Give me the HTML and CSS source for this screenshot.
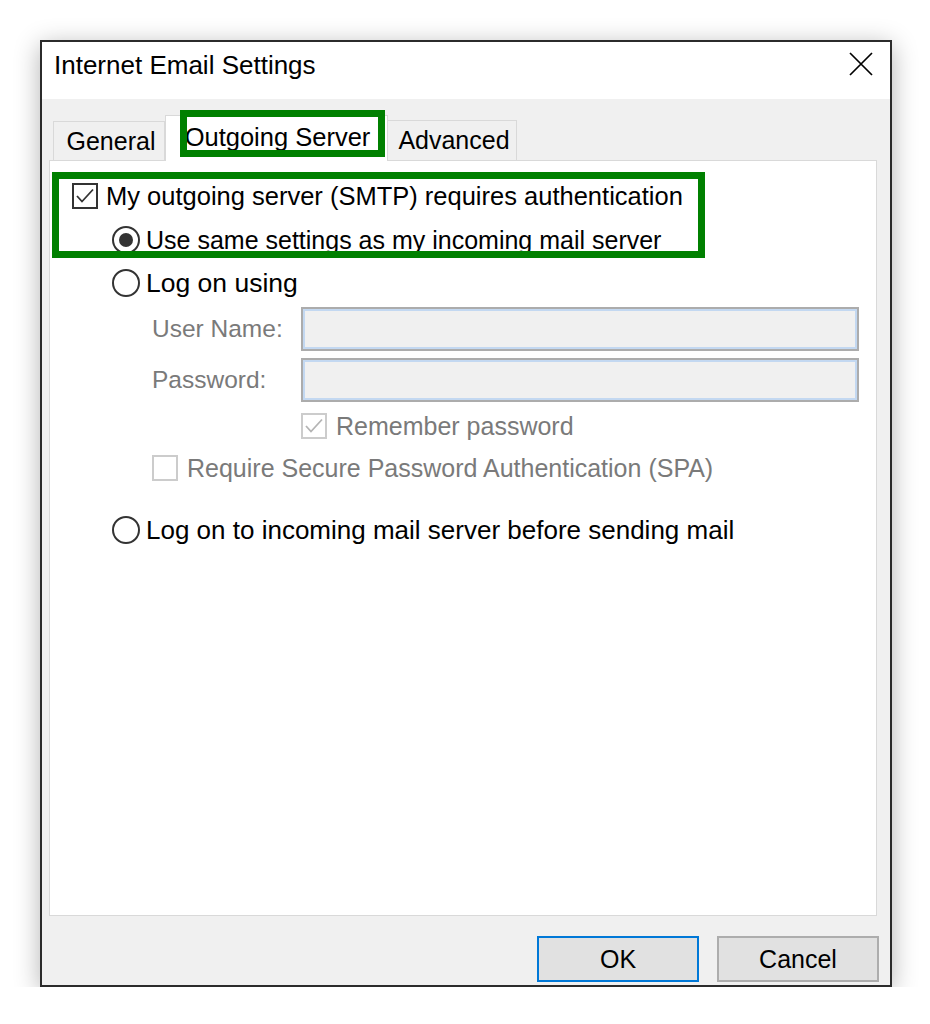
FILE: index.html
```html
<!DOCTYPE html>
<html lang="en">

<head>
    <meta charset="UTF-8">
    <title>Internet Email Settings</title>
    <link rel="stylesheet" href="styles.css">
</head>

<body>
    <div class="window">
        <div class="titlebar">
            <span class="title">Internet Email Settings</span>
            <span class="close">
                <svg width="24" height="24" viewBox="0 0 24 24">
                    <path d="M1 1 L23 23 M23 1 L1 23" stroke="#000" stroke-width="1.7" fill="none" />
                </svg>
            </span>
        </div>

        <div class="dialog-body">
            <div class="tabs">
                <div class="tab tab-general">General</div>
                <div class="tab tab-active">Outgoing Server</div>
                <div class="tab tab-advanced">Advanced</div>
                <div class="highlight hl-tab"></div>
            </div>

            <div class="panel">
                <div class="highlight hl-auth"></div>

                <div class="row row-auth">
                    <span class="checkbox checked">
                        <svg width="22" height="22" viewBox="0 0 22 22">
                            <path d="M3 11 L8 16.5 L19 4.5" stroke="#333" stroke-width="1.8" fill="none" />
                        </svg>
                    </span>
                    <span class="label">My outgoing server (SMTP) requires authentication</span>
                </div>

                <div class="row row-radio row-same">
                    <span class="radio selected"><span class="dot"></span></span>
                    <span class="label">Use same settings as my incoming mail server</span>
                </div>

                <div class="row row-radio row-logon">
                    <span class="radio"></span>
                    <span class="label">Log on using</span>
                </div>

                <div class="row row-field row-user">
                    <span class="field-label">User Name:</span>
                    <span class="textbox"></span>
                </div>

                <div class="row row-field row-pass">
                    <span class="field-label">Password:</span>
                    <span class="textbox"></span>
                </div>

                <div class="row row-remember">
                    <span class="checkbox disabled">
                        <svg width="22" height="22" viewBox="0 0 22 22">
                            <path d="M3 11 L8 16.5 L19 4.5" stroke="#b4b4b4" stroke-width="1.8" fill="none" />
                        </svg>
                    </span>
                    <span class="label muted">Remember password</span>
                </div>

                <div class="row row-spa">
                    <span class="checkbox disabled"></span>
                    <span class="label muted">Require Secure Password Authentication (SPA)</span>
                </div>

                <div class="row row-radio row-before">
                    <span class="radio"></span>
                    <span class="label">Log on to incoming mail server before sending mail</span>
                </div>
            </div>

            <div class="buttons">
                <button class="btn btn-default">OK</button>
                <button class="btn">Cancel</button>
            </div>
        </div>
    </div>
</body>

</html>
```

FILE: styles.css
```css
/* General */
body {
    margin: 0;
    background-color: #fff;
    font-family: "Liberation Sans", Arial, sans-serif;
    color: #000;
}

.window {
    width: 852px;
    margin: 40px 0 0 40px;
    border: 2px solid #2b2b2b;
    box-sizing: border-box;
    background-color: #f0f0f0;
    box-shadow: 0 5px 24px rgba(0, 0, 0, 0.3);
}

/* Title bar */
.titlebar {
    height: 57px;
    box-sizing: border-box;
    padding: 8px 17px 0 12px;
    background-color: #fff;
    display: flex;
    justify-content: space-between;
    align-items: flex-start;
}

.title {
    font-size: 26px;
    line-height: 30px;
}

.close {
    margin-top: 2px;
    display: flex;
}

/* Body */
.dialog-body {
    padding: 0 13px 3px 7px;
}

.tabs {
    position: relative;
    z-index: 2;
    height: 46px;
    margin-top: 16px;
    display: flex;
    align-items: flex-end;
}

.tab {
    box-sizing: border-box;
    border: 1px solid #d9d9d9;
    border-bottom: none;
    background-color: #f0f0f0;
    font-size: 25px;
    display: flex;
    align-items: center;
    justify-content: center;
    padding-left: 4px;
    margin-bottom: 1px;
}

.tab-general {
    width: 112px;
    height: 39px;
    margin-left: 4px;
}

.tab-active {
    width: 223px;
    height: 46px;
    margin-bottom: 0;
    background-color: #fff;
    font-size: 25.5px;
    padding: 0 0 2px 2px;
}

.tab-advanced {
    width: 129px;
    height: 40px;
    border-left: none;
}

/* Green annotation boxes */
.highlight {
    position: absolute;
    box-sizing: border-box;
    border: 7px solid #008000;
}

.hl-tab {
    left: 131px;
    top: -5px;
    width: 205px;
    height: 47px;
}

.hl-auth {
    left: 2px;
    top: 11px;
    width: 653px;
    height: 86px;
}

/* Panel */
.panel {
    position: relative;
    height: 756px;
    box-sizing: border-box;
    margin-top: -1px;
    padding: 13px 0 0 22px;
    border: 1px solid #d9d9d9;
    background-color: #fff;
}

.row {
    display: flex;
    align-items: center;
    font-size: 25.5px;
}

.row-auth {
    height: 44px;
    gap: 8px;
}

.row-radio {
    height: 44px;
    padding-left: 40px;
    gap: 6px;
}

.row-same .label {
    font-size: 25px;
}

.row-logon {
    height: 42px;
}

.row-logon .label {
    font-size: 26.5px;
}

.row-field {
    height: 44px;
    padding-left: 80px;
}

.row-user {
    margin-top: 3px;
}

.row-pass {
    margin-top: 7px;
}

.row-remember {
    height: 44px;
    margin-top: 2px;
    padding-left: 229px;
    gap: 9px;
}

.row-spa {
    height: 40px;
    padding-left: 80px;
    gap: 9px;
}

.row-before {
    height: 40px;
    margin-top: 22px;
}

.row-before .label {
    font-size: 26px;
}

.muted,
.field-label {
    color: #7a7a7a;
}

.muted {
    font-size: 25px;
}

.field-label {
    width: 149px;
    font-size: 24.5px;
}

.textbox {
    width: 558px;
    height: 44px;
    box-sizing: border-box;
    border: 2px solid #acacac;
    box-shadow: inset 0 0 0 2px #c3d8f1;
    background-color: #f0f0f0;
}

/* Checkbox and radio */
.checkbox {
    width: 26px;
    height: 26px;
    box-sizing: border-box;
    border: 2px solid #333;
    background-color: #fff;
    display: flex;
    align-items: center;
    justify-content: center;
    flex-shrink: 0;
}

.checkbox.disabled {
    border-color: #cccccc;
}

.radio {
    width: 28px;
    height: 28px;
    box-sizing: border-box;
    border: 2px solid #333;
    border-radius: 50%;
    background-color: #fff;
    display: flex;
    align-items: center;
    justify-content: center;
    flex-shrink: 0;
}

.radio .dot {
    width: 14px;
    height: 14px;
    border-radius: 50%;
    background-color: #333;
}

/* Buttons */
.buttons {
    display: flex;
    justify-content: flex-end;
    gap: 18px;
    margin: 20px -2px 0 0;
}

.btn {
    width: 162px;
    height: 46px;
    box-sizing: border-box;
    border: 2px solid #adadad;
    background-color: #e1e1e1;
    font-family: "Liberation Sans", Arial, sans-serif;
    font-size: 25px;
    color: #000;
    padding: 0;
}

.btn-default {
    border-color: #0078d7;
}
```
